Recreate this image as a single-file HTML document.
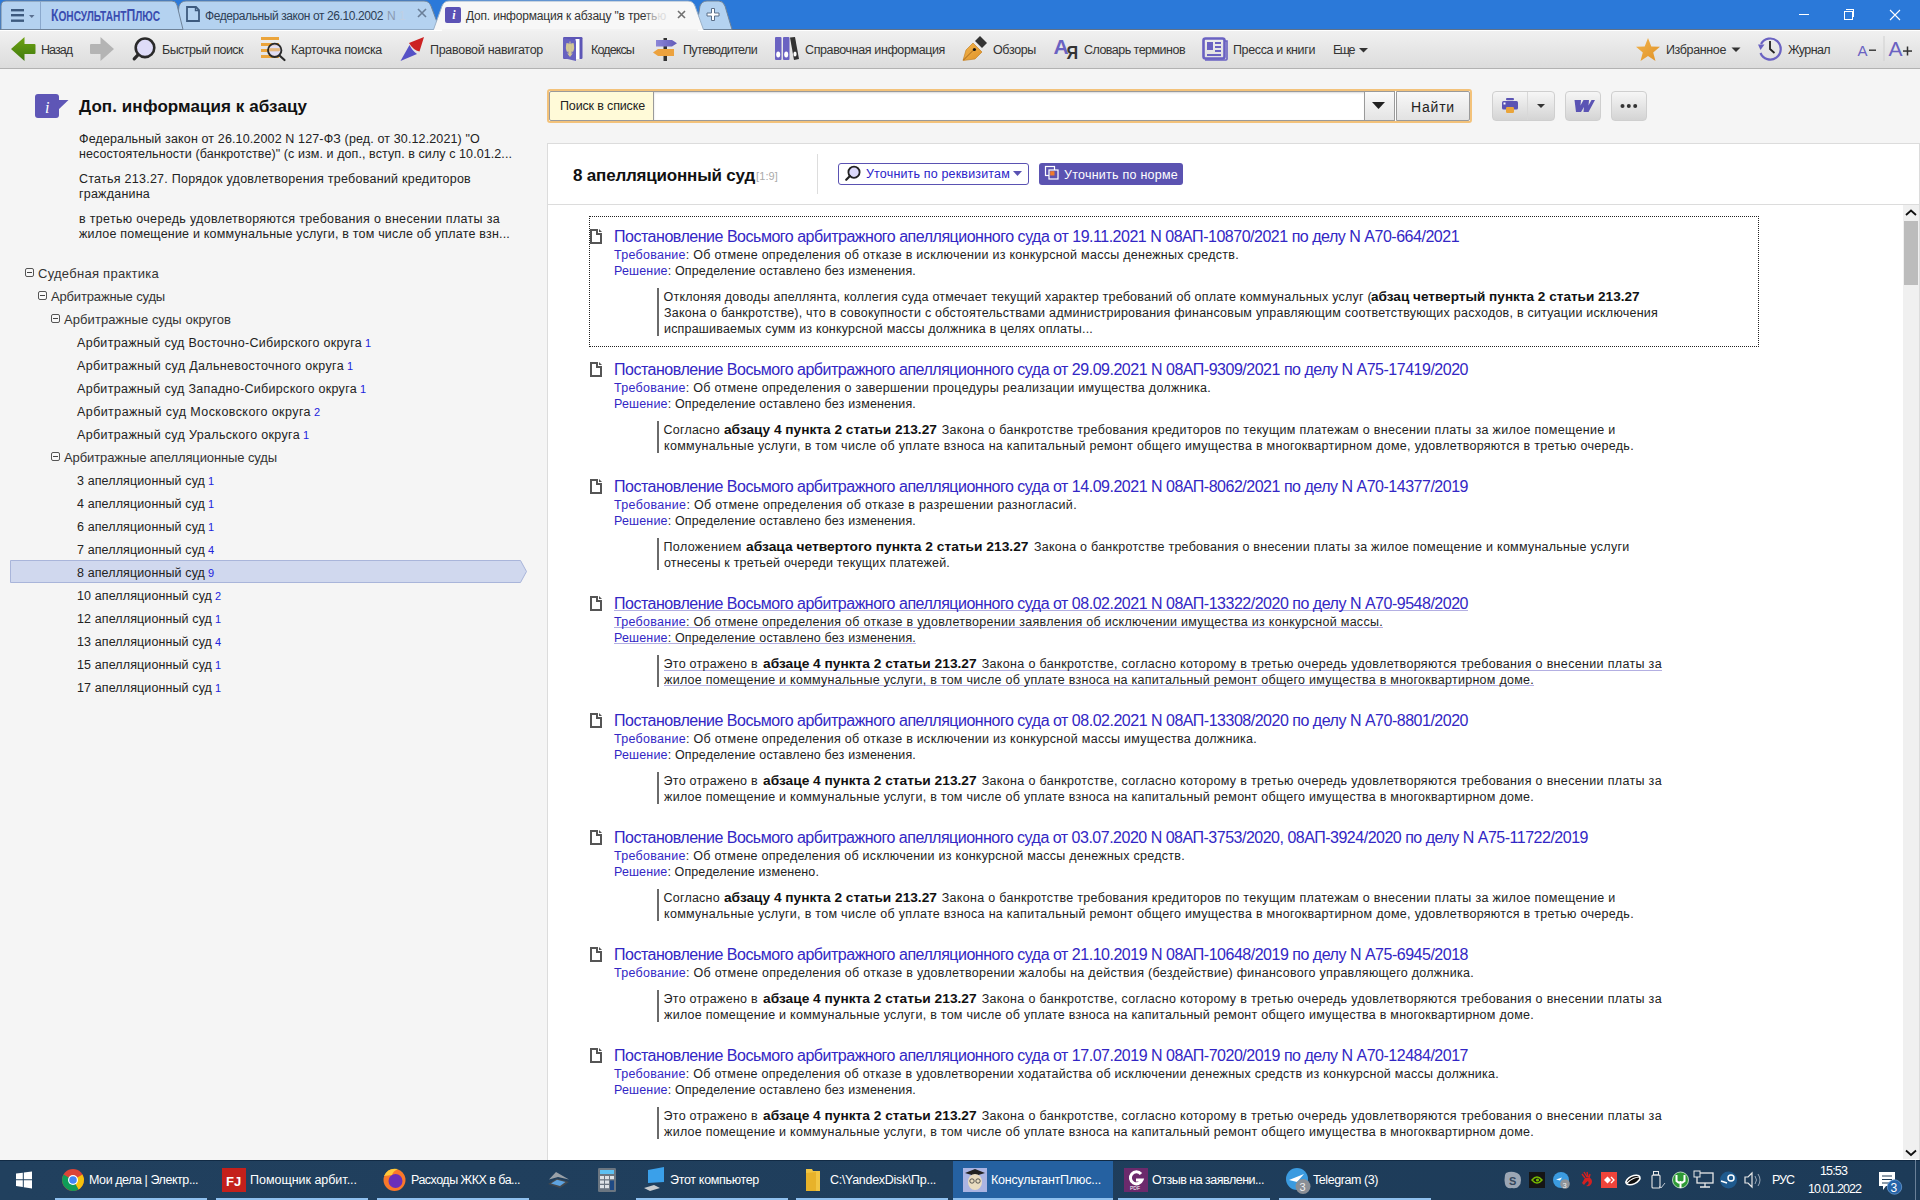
<!DOCTYPE html><html><head><meta charset="utf-8"><style>
html,body{margin:0;padding:0;width:1920px;height:1200px;overflow:hidden;background:#f5f5f5}
body{position:relative;font-family:"Liberation Sans", sans-serif}
.t{position:absolute;white-space:nowrap}
</style></head><body>
<div style="position:absolute;left:0;top:0;width:1920px;height:30px;background:#2b79d9"></div>
<svg style="position:absolute;left:0;top:0" width="1920" height="30">
<rect x="0" y="29" width="1920" height="1" fill="#5f7189"/>
<path d="M176,30 L179,6 Q181,1 186,1 L424,1 Q429,1 431,6 L440,30 Z" fill="#b4d2f0" stroke="#6f8399" stroke-width="1"/>
<path d="M1,30 L1,6 Q1,1 6,1 L172,1 Q176,1 177,5 L183,29.5 L1,29.5 Z" fill="#b4d2f0" stroke="#6f8399" stroke-width="1"/>
<line x1="40.5" y1="1" x2="40.5" y2="29" stroke="#8aa8cc" stroke-width="1"/>
<path d="M696,30 L700,6 Q702,1 707,1 L719,1 Q723,1 725,6 L732,29.5 L696,29.5 Z" fill="#b4d2f0" stroke="#6f8399" stroke-width="1"/>
<path d="M433,31 L442,6 Q444,1 449,1 L688,1 Q693,1 695,6 L704,31 Z" fill="#f7f7f7" stroke="#9ab0c8" stroke-width="1"/>

<rect x="11" y="9" width="13" height="2.4" fill="#3d5a7e"/>
<rect x="11" y="14" width="13" height="2.4" fill="#3d5a7e"/>
<rect x="11" y="19.5" width="13" height="2.4" fill="#3d5a7e"/>
<path d="M29,15 L34.5,15 L31.75,18 Z" fill="#5a7090"/>
<path d="M187,7 L196,7 L199,10 L199,21 L187,21 Z" fill="none" stroke="#3d5a7e" stroke-width="1.8"/>
<path d="M195.5,7 L195.5,10.5 L199,10.5" fill="none" stroke="#3d5a7e" stroke-width="1.4"/>
<path d="M418,9 L426,17 M426,9 L418,17" stroke="#6a7f98" stroke-width="1.6"/>
<rect x="445" y="7" width="16" height="16" rx="2" fill="#5b52b5"/>
<path d="M678,11 L685,18 M685,11 L678,18" stroke="#707070" stroke-width="1.6"/>
<path d="M707,13 L711.5,13 L711.5,8.5 L714.5,8.5 L714.5,13 L719,13 L719,16 L714.5,16 L714.5,20.5 L711.5,20.5 L711.5,16 L707,16 Z" fill="#fff" stroke="#5a6e88" stroke-width="1"/>
</svg>
<div style="position:absolute;left:451px;top:7px;width:6px;height:16px;color:#fff;font:italic bold 12px 'Liberation Serif',serif;line-height:16px;text-align:center">i</div>
<svg style="position:absolute;left:1780;top:0" width="140" height="30">
</svg>
<div style="position:absolute;left:1799px;top:14px;width:10px;height:1px;background:#fff"></div>
<div style="position:absolute;left:1844px;top:11px;width:7px;height:7px;border:1px solid #fff"></div>
<div style="position:absolute;left:1846px;top:9px;width:7px;height:7px;border-top:1px solid #fff;border-right:1px solid #fff"></div>
<svg style="position:absolute;left:1889px;top:9px" width="12" height="12"><path d="M1,1 L11,11 M11,1 L1,11" stroke="#fff" stroke-width="1.1"/></svg>
<div style="position:absolute;left:0;top:30px;width:1920px;height:38px;background:linear-gradient(#f1f1f1,#dcdcdc);border-bottom:1px solid #b2b2b2;box-shadow:inset 0 1px 0 #fff"></div>
<div style="position:absolute;left:442px;top:29px;width:256px;height:2px;background:#f2f2f2"></div>
<svg style="position:absolute;left:0;top:30px" width="1920" height="38">
<defs>
<linearGradient id="gg" x1="0" y1="0" x2="0" y2="1"><stop offset="0" stop-color="#6ea312"/><stop offset="1" stop-color="#3f7a0e"/></linearGradient>
<linearGradient id="og" x1="0" y1="0" x2="1" y2="1"><stop offset="0" stop-color="#f2b44c"/><stop offset="1" stop-color="#e09228"/></linearGradient>
<linearGradient id="pg" x1="0" y1="0" x2="1" y2="0"><stop offset="0" stop-color="#8c86d8"/><stop offset="1" stop-color="#615ab8"/></linearGradient>
</defs>
<!-- back -->
<path d="M11,19 L24.5,7 L24.5,14 L34.5,14 Q35.5,14 35.5,15 L35.5,23 Q35.5,24 34.5,24 L24.5,24 L24.5,31 Z" fill="url(#gg)"/>
<!-- forward -->
<path d="M114,19 L100.5,7 L100.5,14 L91,14 Q90,14 90,15 L90,23 Q90,24 91,24 L100.5,24 L100.5,31 Z" fill="#b4b4b4"/>
<!-- quick search -->
<circle cx="145" cy="17.8" r="9.3" fill="#dedcf8" stroke="#2a2a2a" stroke-width="2.6"/>
<path d="M138.2,24.6 L134.2,28.8" stroke="#2a2a2a" stroke-width="3.2" stroke-linecap="round"/>
<!-- card search -->
<rect x="261" y="7" width="18" height="3" fill="#eba43a"/>
<rect x="261" y="13" width="18" height="3" fill="#eba43a"/>
<rect x="261" y="19" width="18" height="3" fill="#eba43a"/>
<rect x="261" y="25" width="18" height="3" fill="#eba43a"/>
<circle cx="274.7" cy="20.3" r="6.7" fill="#dedcf8" fill-opacity="0.8" stroke="#2a2a2a" stroke-width="1.9"/>
<rect x="269" y="18" width="11" height="3" fill="#eba43a" opacity="0.55"/>
<path d="M279.5,25.5 L284.5,30" stroke="#2a2a2a" stroke-width="2.2" stroke-linecap="round"/>
<!-- navigator -->
<path d="M409,13 L424,7 L419.5,21.5 Q413,20 409,13 Z" fill="#cc2222"/>
<path d="M400.5,31 L409.5,15 Q412.5,21 417,24 Z" fill="#5551c6"/>
<!-- codex -->
<rect x="563" y="7" width="19.5" height="22" rx="1.2" fill="#5d56b6"/>
<rect x="575.5" y="9" width="4" height="20" fill="#fff"/>
<path d="M563,8 L575,10 Q576,10.5 576,12 L576,31 L563,28 Z" fill="#6761c0"/>
<path d="M566.5,13 Q565,18 567,22 L569,21 Q568,17 569,13.5 Z M573.5,13 Q575,18 573,22 L571,21 Q572,17 571,13.5 Z" fill="#d2c796"/>
<path d="M569.5,11.5 L570.5,11.5 L570.5,13.5 L572,15 L571.5,25 L570,27 L568.5,25 L568,15 L569.5,13.5 Z" fill="#d2c796"/>
<path d="M567,22 Q570,27.5 573,22 L572,24.5 Q570,26.5 568,24.5 Z" fill="#d2c796"/>
<!-- guides -->
<rect x="663.5" y="8" width="3.5" height="23" fill="#333"/>
<path d="M656,10 L672,10 L677,13.3 L672,16.6 L656,16.6 Z" fill="url(#pg)"/>
<path d="M674,19 L658,19 L653,22.5 L658,26 L674,26 Z" fill="#eca23e"/>
<!-- reference binders -->
<rect x="775" y="7" width="6.5" height="23" rx="1" fill="#6a62c2"/>
<rect x="783" y="7" width="6.5" height="23" rx="1" fill="#6a62c2"/>
<path d="M790,7.5 L795,7 L799,29 L794,30 Z" fill="#333"/>
<ellipse cx="778.2" cy="24.5" rx="2" ry="3" fill="#fff"/>
<ellipse cx="786.2" cy="24.5" rx="2" ry="3" fill="#fff"/>
<ellipse cx="795" cy="24" rx="1.6" ry="2.6" fill="#fff"/>
<!-- reviews pen -->
<path d="M963,30.5 L966,20 L973,13 L982,22 L975,29 Z" fill="url(#og)" stroke="#c07818" stroke-width="0.6"/>
<path d="M975,11 L980,6 L987,13 L982,18 Z" fill="#333"/>
<path d="M963.5,30 L973.5,20" stroke="#8a5010" stroke-width="0.7"/>
<circle cx="974.4" cy="19.5" r="1.6" fill="#111"/>
<!-- dict -->
<text x="1053.5" y="24" font-family="Liberation Sans" font-weight="bold" font-size="21" fill="#6a62c2">A</text>
<text x="1066.5" y="29" font-family="Liberation Sans" font-weight="bold" font-size="19" fill="#333" transform="translate(1066.5,29) scale(0.85,1) translate(-1066.5,-29)">Я</text>
<!-- press -->
<rect x="1203.5" y="8.5" width="21" height="20" rx="2" fill="none" stroke="#6a62c2" stroke-width="2.6"/>
<path d="M1225,11 L1227,11 L1227,29 Q1227,30 1226,30 L1205,30" fill="none" stroke="#6a62c2" stroke-width="1.6"/>
<rect x="1207" y="12" width="6" height="8" fill="#6a62c2"/>
<rect x="1215" y="12" width="6" height="2" fill="#6a62c2"/>
<rect x="1215" y="16" width="6" height="2" fill="#6a62c2"/>
<rect x="1215" y="20" width="6" height="2" fill="#6a62c2"/>
<rect x="1207" y="24" width="14" height="2" fill="#6a62c2"/>
<!-- more arrow -->
<path d="M1359,18 L1368,18 L1363.5,22.5 Z" fill="#333"/>
<!-- star -->
<path d="M1648,8 L1651.3,16.5 L1660,16.8 L1653.2,22.4 L1655.5,31 L1648,26 L1640.5,31 L1642.8,22.4 L1636,16.8 L1644.7,16.5 Z" fill="url(#og)"/>
<path d="M1731.5,17.5 L1740.5,17.5 L1736,22 Z" fill="#333"/>
<!-- journal clock -->
<path d="M1761,14 A10.5,10.5 0 1 1 1760.5,23" fill="none" stroke="#6a62c2" stroke-width="2.2"/>
<path d="M1758,14.5 L1764.5,14.5 L1760.5,20 Z" fill="#6a62c2"/>
<path d="M1770,11 L1770,19 L1774.5,23" fill="none" stroke="#222" stroke-width="1.8"/>
<!-- A- A+ -->
<text x="1857.5" y="25.5" font-family="Liberation Sans" font-size="15" fill="#6a62c2">A</text>
<rect x="1869" y="19.5" width="7" height="1.4" fill="#333"/>
<rect x="1883.5" y="6" width="1" height="25" fill="#d0d0d0"/>
<text x="1888.5" y="26" font-family="Liberation Sans" font-size="21" fill="#6a62c2">A</text>
<rect x="1903" y="20.3" width="9" height="1.5" fill="#333"/>
<rect x="1906.75" y="16.5" width="1.5" height="9" fill="#333"/>
</svg>
<div style="position:absolute;left:0;top:69px;width:1920px;height:1091px;background:#f5f5f5"></div>
<svg style="position:absolute;left:34px;top:93px" width="36" height="26">
<rect x="1" y="1" width="24" height="24" rx="3" fill="#5e56b6"/>
<path d="M22,7 L34.5,7 L24,17 Z" fill="#5e56b6"/>
<text x="11" y="19.5" font-family="Liberation Serif" font-style="italic" font-size="16" fill="#fff">i</text>
</svg>
<svg style="position:absolute;left:9px;top:559px" width="522" height="26">
<path d="M1.5,1.5 L511.5,1.5 L517.5,12.5 L511.5,23.5 L1.5,23.5 Z" fill="#d0d8ee" stroke="#a9b5da" stroke-width="1"/>
</svg>
<div style="position:absolute;left:25px;top:268px;width:7px;height:7px;border:1px solid #555;border-radius:2px;background:#f8f8f8"></div><div style="position:absolute;left:27px;top:272px;width:5px;height:1px;background:#444"></div>
<div style="position:absolute;left:38px;top:291px;width:7px;height:7px;border:1px solid #555;border-radius:2px;background:#f8f8f8"></div><div style="position:absolute;left:40px;top:295px;width:5px;height:1px;background:#444"></div>
<div style="position:absolute;left:51px;top:314px;width:7px;height:7px;border:1px solid #555;border-radius:2px;background:#f8f8f8"></div><div style="position:absolute;left:53px;top:318px;width:5px;height:1px;background:#444"></div>
<div style="position:absolute;left:51px;top:452px;width:7px;height:7px;border:1px solid #555;border-radius:2px;background:#f8f8f8"></div><div style="position:absolute;left:53px;top:456px;width:5px;height:1px;background:#444"></div>
<div style="position:absolute;left:547px;top:89px;width:921px;height:30px;border:2px solid #f3c27a;border-radius:3px;background:#fff"></div>
<div style="position:absolute;left:549px;top:91px;width:104px;height:28px;background:#fffad8;border:1px solid #9a9a9a;border-radius:2px 0 0 2px"></div>
<div style="position:absolute;left:653px;top:91px;width:711px;height:28px;background:#fff;border-top:1px solid #9a9a9a;border-bottom:1px solid #9a9a9a;border-left:1px solid #9a9a9a;box-shadow:inset 0 1px 2px rgba(0,0,0,0.15)"></div>
<div style="position:absolute;left:1364px;top:91px;width:29px;height:28px;background:linear-gradient(#fafafa,#e4e4e4);border:1px solid #9a9a9a"></div>
<svg style="position:absolute;left:1371px;top:101px" width="15" height="9"><path d="M1,1 L14,1 L7.5,8 Z" fill="#222"/></svg>
<div style="position:absolute;left:1396px;top:91px;width:72px;height:28px;background:linear-gradient(#f8f8f8,#e2e2e2);border:1px solid #9a9a9a;border-radius:0 2px 2px 0"></div>

<div style="position:absolute;left:1492px;top:91px;width:63px;height:30px;border-radius:4px;background:linear-gradient(#f6f6f6,#d4d4d4);border:1px solid #cfcfcf;box-sizing:border-box"></div>
<div style="position:absolute;left:1527px;top:92px;width:1px;height:28px;background:#d8d8d8"></div>
<div style="position:absolute;left:1565px;top:91px;width:36px;height:30px;border-radius:4px;background:linear-gradient(#f6f6f6,#d4d4d4);border:1px solid #cfcfcf;box-sizing:border-box"></div>
<div style="position:absolute;left:1611px;top:91px;width:36px;height:30px;border-radius:4px;background:linear-gradient(#f6f6f6,#d4d4d4);border:1px solid #cfcfcf;box-sizing:border-box"></div>
<svg style="position:absolute;left:1500px;top:96px" width="140" height="20">
<rect x="6" y="2" width="8" height="2.2" rx="1" fill="#5b54b4"/>
<rect x="2" y="5" width="16" height="8.5" rx="1.5" fill="#5b54b4"/>
<rect x="3.5" y="6.5" width="2" height="2" fill="#fff"/>
<rect x="6" y="11" width="8" height="6" rx="1.2" fill="#eaa53a"/>
<path d="M37,8 L45,8 L41,12 Z" fill="#333"/>
<path d="M74.5,4 L81,4 L80.5,9.5 L83.5,4 L89,4 L88.5,9.5 L91.5,4 L95,4 L88.5,16 L83.5,16 L84,11 L81,16 L76,16 Z" fill="#5b54b4"/>
<circle cx="122.5" cy="10" r="2" fill="#333"/><circle cx="128.8" cy="10" r="2" fill="#333"/><circle cx="135.2" cy="10" r="2" fill="#333"/>
</svg>
<div style="position:absolute;left:547px;top:143px;width:1371px;height:1016px;background:#fff;border-left:1px solid #dcdcdc;border-top:1px solid #dcdcdc;border-right:1px solid #dcdcdc"></div>
<div style="position:absolute;left:548px;top:204px;width:1371px;height:1px;background:#dcdcdc"></div>
<div style="position:absolute;left:817px;top:154px;width:1px;height:40px;background:#dddddd"></div>
<div style="position:absolute;left:838px;top:163px;width:189px;height:20px;border:1px solid #5a52b2;border-radius:3px;background:#fff"></div>
<svg style="position:absolute;left:844px;top:165px" width="18" height="18"><circle cx="10" cy="7.2" r="5.6" fill="#dcd9fa" stroke="#222" stroke-width="1.8"/><path d="M6,11 L2.2,14.8" stroke="#222" stroke-width="2.2" stroke-linecap="round"/></svg>
<svg style="position:absolute;left:1013px;top:171px" width="10" height="6"><path d="M0,0 L9,0 L4.5,5 Z" fill="#5a52b2"/></svg>
<div style="position:absolute;left:1039px;top:163px;width:144px;height:22px;border-radius:3px;background:#5b53b1"></div>
<svg style="position:absolute;left:1044px;top:165px" width="18" height="18">
<rect x="1.5" y="1.5" width="9" height="9" fill="none" stroke="#fff" stroke-width="1.2"/>
<rect x="5" y="5" width="9" height="9" fill="#5b53b1" stroke="#fff" stroke-width="1.2"/>
<rect x="6.2" y="6.2" width="4.3" height="4.3" fill="#f07b2a"/>
</svg>
<div style="position:absolute;left:1903px;top:205px;width:16px;height:954px;background:#f0f0f0"></div>
<div style="position:absolute;left:1904px;top:221px;width:14px;height:64px;background:#bcbcbc"></div>
<svg style="position:absolute;left:1904px;top:208px" width="14" height="10"><path d="M2,7 L7,2.5 L12,7" fill="none" stroke="#111" stroke-width="1.8"/></svg>
<svg style="position:absolute;left:1904px;top:1148px" width="14" height="10"><path d="M2,2.5 L7,7 L12,2.5" fill="none" stroke="#111" stroke-width="1.8"/></svg>

<div style="position:absolute;left:589px;top:216px;width:1168px;height:129px;border:1px dotted #222"></div>
<svg style="position:absolute;left:590px;top:229px" width="12" height="15"><path d="M0,0 H8 V4 H12 V15 H0 Z M2,2 V13 H10 V6 H6 V2 Z" fill="#555" fill-rule="evenodd"/><path d="M9,0 L9,3 L12,3 Z" fill="#555"/><path d="M2,2 H6 V6 H10 V13 H2 Z" fill="#fff"/></svg>
<div style="position:absolute;left:657px;top:288px;width:2px;height:48px;background:#6a6a6a"></div>
<svg style="position:absolute;left:590px;top:362px" width="12" height="15"><path d="M0,0 H8 V4 H12 V15 H0 Z M2,2 V13 H10 V6 H6 V2 Z" fill="#555" fill-rule="evenodd"/><path d="M9,0 L9,3 L12,3 Z" fill="#555"/><path d="M2,2 H6 V6 H10 V13 H2 Z" fill="#fff"/></svg>
<div style="position:absolute;left:657px;top:421px;width:2px;height:32px;background:#6a6a6a"></div>
<svg style="position:absolute;left:590px;top:479px" width="12" height="15"><path d="M0,0 H8 V4 H12 V15 H0 Z M2,2 V13 H10 V6 H6 V2 Z" fill="#555" fill-rule="evenodd"/><path d="M9,0 L9,3 L12,3 Z" fill="#555"/><path d="M2,2 H6 V6 H10 V13 H2 Z" fill="#fff"/></svg>
<div style="position:absolute;left:657px;top:538px;width:2px;height:32px;background:#6a6a6a"></div>
<svg style="position:absolute;left:590px;top:596px" width="12" height="15"><path d="M0,0 H8 V4 H12 V15 H0 Z M2,2 V13 H10 V6 H6 V2 Z" fill="#555" fill-rule="evenodd"/><path d="M9,0 L9,3 L12,3 Z" fill="#555"/><path d="M2,2 H6 V6 H10 V13 H2 Z" fill="#fff"/></svg>
<div style="position:absolute;left:657px;top:655px;width:2px;height:32px;background:#6a6a6a"></div>
<div style="position:absolute;left:664px;top:670px;width:998px;height:1px;background:#b3afe2"></div>
<svg style="position:absolute;left:590px;top:713px" width="12" height="15"><path d="M0,0 H8 V4 H12 V15 H0 Z M2,2 V13 H10 V6 H6 V2 Z" fill="#555" fill-rule="evenodd"/><path d="M9,0 L9,3 L12,3 Z" fill="#555"/><path d="M2,2 H6 V6 H10 V13 H2 Z" fill="#fff"/></svg>
<div style="position:absolute;left:657px;top:772px;width:2px;height:32px;background:#6a6a6a"></div>
<svg style="position:absolute;left:590px;top:830px" width="12" height="15"><path d="M0,0 H8 V4 H12 V15 H0 Z M2,2 V13 H10 V6 H6 V2 Z" fill="#555" fill-rule="evenodd"/><path d="M9,0 L9,3 L12,3 Z" fill="#555"/><path d="M2,2 H6 V6 H10 V13 H2 Z" fill="#fff"/></svg>
<div style="position:absolute;left:657px;top:889px;width:2px;height:32px;background:#6a6a6a"></div>
<svg style="position:absolute;left:590px;top:947px" width="12" height="15"><path d="M0,0 H8 V4 H12 V15 H0 Z M2,2 V13 H10 V6 H6 V2 Z" fill="#555" fill-rule="evenodd"/><path d="M9,0 L9,3 L12,3 Z" fill="#555"/><path d="M2,2 H6 V6 H10 V13 H2 Z" fill="#fff"/></svg>
<div style="position:absolute;left:657px;top:990px;width:2px;height:32px;background:#6a6a6a"></div>
<svg style="position:absolute;left:590px;top:1048px" width="12" height="15"><path d="M0,0 H8 V4 H12 V15 H0 Z M2,2 V13 H10 V6 H6 V2 Z" fill="#555" fill-rule="evenodd"/><path d="M9,0 L9,3 L12,3 Z" fill="#555"/><path d="M2,2 H6 V6 H10 V13 H2 Z" fill="#fff"/></svg>
<div style="position:absolute;left:657px;top:1107px;width:2px;height:32px;background:#6a6a6a"></div>
<div style="position:absolute;left:0;top:1160px;width:1920px;height:40px;background:linear-gradient(90deg,#21405e,#1f3e5c 50%,#1d3b58);border-top:1px solid #112a44;box-sizing:border-box"></div>
<div style="position:absolute;left:953px;top:1161px;width:160px;height:39px;background:#2561a1"></div>
<div style="position:absolute;left:55px;top:1198px;width:152px;height:2px;background:#8fc0ee"></div>
<div style="position:absolute;left:216px;top:1198px;width:152px;height:2px;background:#8fc0ee"></div>
<div style="position:absolute;left:377px;top:1198px;width:152px;height:2px;background:#8fc0ee"></div>
<div style="position:absolute;left:636px;top:1198px;width:152px;height:2px;background:#8fc0ee"></div>
<div style="position:absolute;left:796px;top:1198px;width:152px;height:2px;background:#8fc0ee"></div>
<div style="position:absolute;left:953px;top:1198px;width:160px;height:2px;background:#8fc0ee"></div>
<div style="position:absolute;left:1118px;top:1198px;width:152px;height:2px;background:#8fc0ee"></div>
<div style="position:absolute;left:1279px;top:1198px;width:152px;height:2px;background:#8fc0ee"></div>
<svg style="position:absolute;left:0;top:1160px" width="1920" height="40">
<!-- windows logo -->
<path d="M16,13.6 L22.8,12.7 L22.8,19.3 L16,19.3 Z M23.8,12.5 L32,11.4 L32,19.3 L23.8,19.3 Z M16,20.3 L22.8,20.3 L22.8,27 L16,26.1 Z M23.8,20.3 L32,20.3 L32,28.4 L23.8,27.2 Z" fill="#fff"/>
<!-- chrome -->
<circle cx="73" cy="20" r="11" fill="#db4437"/>
<path d="M73,20 L82.5,14.5 A11,11 0 0 1 78.5,29.5 Z" fill="#f4c20d"/>
<path d="M73,20 L78.5,29.5 A11,11 0 0 1 62.5,17 L63.5,14.5 Z" fill="#0f9d58"/>
<circle cx="73" cy="20" r="5" fill="#fff"/><circle cx="73" cy="20" r="3.8" fill="#4285f4"/>
<!-- red FJ -->
<rect x="222" y="8" width="24" height="24" fill="#c4201b"/>
<text x="226" y="26" font-family="Liberation Sans" font-weight="bold" font-size="13" fill="#fff">FJ</text>
<!-- firefox -->
<circle cx="394.5" cy="20" r="11" fill="#f9782a"/>
<circle cx="395.5" cy="21" r="7" fill="#6a2fb8"/>
<path d="M384,16 Q388,7 398,9 Q393,11 392,15 Z" fill="#ffc93a"/>
<!-- scanner -->
<path d="M548,24 L560,28 L569,22 L557,18.5 Z" fill="#44494f"/>
<path d="M551,23.5 L560,26 L565.5,22 L557,19.8 Z" fill="#5ea3e0"/>
<path d="M549,19.5 L556,12 L569,19.5 L558,17 Z" fill="#9aa1a8"/>
<!-- calculator -->
<rect x="598" y="8" width="18" height="24" rx="1.2" fill="#6b7681"/>
<rect x="600" y="10" width="14" height="4" fill="#5cc0f2"/>
<g fill="#dde2e6"><rect x="600" y="16" width="4" height="3.2"/><rect x="605" y="16" width="4" height="3.2"/><rect x="610" y="16" width="4" height="3.2"/>
<rect x="600" y="20.5" width="4" height="3.2"/><rect x="605" y="20.5" width="4" height="3.2"/>
<rect x="600" y="25" width="4" height="3.2"/><rect x="605" y="25" width="4" height="3.2"/></g>
<rect x="610" y="20.5" width="4" height="9.5" fill="#1f4a84"/>
<!-- this computer -->
<path d="M648,10 L664,7 L664,22 L648,23 Z" fill="#3aa0ea"/>
<path d="M644,28 L654,25 L660,28 L650,31 Z" fill="#c8ccd0"/>
<!-- folder -->
<path d="M806,9 L812,9 L813,11 L820,11 L820,31 L806,31 Z" fill="#f1c543"/>
<path d="M806,13 L816,12 L816,31 L806,31 Z" fill="#e7b22a"/>
<!-- konsultant avatar -->
<rect x="963" y="8" width="24" height="24" fill="#aab4e2"/>
<path d="M965,13 L975,9 L985,13 L975,16 Z" fill="#222"/>
<ellipse cx="975" cy="22" rx="7" ry="8" fill="#e9dcc0"/>
<circle cx="972" cy="21" r="2.2" fill="none" stroke="#333" stroke-width="0.8"/><circle cx="978" cy="21" r="2.2" fill="none" stroke="#333" stroke-width="0.8"/>
<!-- pdf -->
<rect x="1124" y="8" width="24" height="24" fill="#6c2a6c"/>
<path d="M1141,14 A6,6 0 1 0 1142,20 L1136,20" fill="none" stroke="#fff" stroke-width="3"/>
<text x="1130" y="30" font-family="Liberation Sans" font-size="5" fill="#fff">PDF</text>
<!-- telegram -->
<circle cx="1297" cy="19" r="11" fill="#3b9be0"/>
<path d="M1289,20 L1304,14 L1297,22 Z" fill="#fff"/>
<circle cx="1303" cy="26.5" r="7.5" fill="#8a8f96"/>
<text x="1299.5" y="31" font-family="Liberation Sans" font-size="11" fill="#eee">3</text>
<!-- tray -->
<path d="M1506,13 Q1510,11 1514,12 Q1521,13 1521,20 Q1521,24 1519,26 Q1517,29 1512,28 Q1506,29 1505,24 Q1504,20 1505,15 Z" fill="#9ba6b4"/>
<text x="1509" y="24.5" font-family="Liberation Sans" font-weight="bold" font-size="11" fill="#34465c">S</text>
<rect x="1529" y="12" width="16" height="16" fill="#151515"/>
<path d="M1532,20 Q1537,14 1542,20 Q1537,26 1532,20 Z" fill="none" stroke="#76b900" stroke-width="1.5"/>
<circle cx="1537.5" cy="20" r="1.6" fill="#76b900"/>
<circle cx="1561" cy="20" r="8" fill="#3b9be0"/>
<path d="M1556,19.5 L1562,17.5 L1560,20.5 Z" fill="#fff"/>
<circle cx="1565" cy="24" r="4.8" fill="#8f9399"/>
<text x="1562.5" y="27.5" font-family="Liberation Sans" font-size="7.5" fill="#eee">3</text>
<path d="M1582,14 L1585,18 M1584,12 L1587,17 M1587,12 L1588,17 M1590,14 L1589,18" stroke="#d42020" stroke-width="1.4"/>
<path d="M1585,18 Q1592,16 1592,22 Q1591,27 1586,26 Q1590,24 1588,21 Q1586,22 1584,25 L1582,23 Z" fill="#d42020"/>
<rect x="1601" y="12" width="16" height="16" fill="#ef443b"/>
<path d="M1604,20 L1607.5,16.5 L1611,20 L1607.5,23.5 Z" fill="#fff"/>
<path d="M1611,17 L1614,20 L1611,23" fill="none" stroke="#fff" stroke-width="1.3"/>
<ellipse cx="1633" cy="20" rx="7.5" ry="4" transform="rotate(-25 1633 20)" fill="#0d0d0d" stroke="#fff" stroke-width="1.6"/>
<path d="M1627,23 Q1633,17 1640,17" fill="none" stroke="#fff" stroke-width="1.2"/>
<rect x="1652" y="15" width="8" height="13" rx="1" fill="none" stroke="#e8e8e8" stroke-width="1.1"/>
<rect x="1653.5" y="11.5" width="5" height="3.5" fill="none" stroke="#e8e8e8" stroke-width="1"/>
<path d="M1659,26 L1661,28 L1665,23" fill="none" stroke="#bfc8d2" stroke-width="1"/>
<circle cx="1680.5" cy="20" r="8" fill="#2e9a36" stroke="#d8efd8" stroke-width="0.8"/>
<path d="M1676.5,15 L1676.5,21 Q1680.5,25 1684.5,21 L1684.5,15 M1680.5,21 L1680.5,28" fill="none" stroke="#fff" stroke-width="2"/>
<rect x="1697" y="13" width="16" height="10" fill="none" stroke="#e8e8e8" stroke-width="1.3"/>
<path d="M1705,23 L1705,27 M1700,27 L1710,27" stroke="#e8e8e8" stroke-width="1.3"/>
<rect x="1694" y="11" width="6" height="6" fill="#1f3e5c" stroke="#e8e8e8" stroke-width="1"/>
<circle cx="1728.5" cy="20" r="8.5" fill="#1e5a8e"/>
<circle cx="1731" cy="18" r="3" fill="none" stroke="#fff" stroke-width="1.5"/>
<path d="M1721,21 L1727,23" stroke="#fff" stroke-width="1.6"/>
<path d="M1745,17 L1748,17 L1752,13 L1752,27 L1748,23 L1745,23 Z" fill="none" stroke="#e8e8e8" stroke-width="1.2"/>
<path d="M1755,16 Q1758,20 1755,24 M1758,14 Q1762,20 1758,26" fill="none" stroke="#9aa8b8" stroke-width="1"/>
<!-- notification -->
<path d="M1879,12 L1895,12 L1895,26 L1886,26 L1883,30 L1883,26 L1879,26 Z" fill="#fff"/>
<path d="M1882,16 L1892,16 M1882,19.5 L1892,19.5 M1882,23 L1889,23" stroke="#1c3954" stroke-width="1"/>
<circle cx="1894.5" cy="27" r="7.2" fill="#2563a8" stroke="#6a9ad0" stroke-width="0.8"/>
<text x="1890.5" y="31.5" font-family="Liberation Sans" font-size="12" fill="#fff">3</text>
<rect x="1915" y="0" width="1" height="40" fill="#6a8098"/>
</svg>
<div class="t" id="t0" style="left:51px;top:3.85px;font-size:17.4px;line-height:22px;color:#3a4db0;font-weight:bold;transform:scaleX(0.6991);transform-origin:0 0;">К<span style="font-size:14.5px">ОНСУЛЬТАНТ</span>П<span style="font-size:14.5px">ЛЮС</span></div>
<div class="t" id="t1" style="left:205px;top:8.53px;font-size:12px;line-height:15px;color:#2d3e55;letter-spacing:-0.406px;">Федеральный закон от 26.10.2002</div>
<div class="t" id="t2" style="left:387px;top:8.53px;font-size:12px;line-height:15px;color:#8a9ab2;">N <span style="color:#c0d0e4">1</span></div>
<div class="t" id="t3" style="left:466px;top:8.53px;font-size:12px;line-height:15px;color:#333;letter-spacing:-0.189px;">Доп. информация к абзацу "в тре<span style="color:#777">т</span><span style="color:#aaa">ь</span><span style="color:#ddd">ю</span></div>
<div class="t" id="t4" style="left:41px;top:41.87px;font-size:12.5px;line-height:16px;color:#333;letter-spacing:-0.966px;">Назад</div>
<div class="t" id="t5" style="left:162px;top:41.87px;font-size:12.5px;line-height:16px;color:#333;letter-spacing:-0.537px;">Быстрый поиск</div>
<div class="t" id="t6" style="left:291px;top:41.87px;font-size:12.5px;line-height:16px;color:#333;letter-spacing:-0.301px;">Карточка поиска</div>
<div class="t" id="t7" style="left:430px;top:41.87px;font-size:12.5px;line-height:16px;color:#333;letter-spacing:-0.288px;">Правовой навигатор</div>
<div class="t" id="t8" style="left:591px;top:41.87px;font-size:12.5px;line-height:16px;color:#333;letter-spacing:-0.866px;">Кодексы</div>
<div class="t" id="t9" style="left:683px;top:41.87px;font-size:12.5px;line-height:16px;color:#333;letter-spacing:-0.635px;">Путеводители</div>
<div class="t" id="t10" style="left:805px;top:41.87px;font-size:12.5px;line-height:16px;color:#333;letter-spacing:-0.382px;">Справочная информация</div>
<div class="t" id="t11" style="left:993px;top:41.87px;font-size:12.5px;line-height:16px;color:#333;letter-spacing:-0.349px;">Обзоры</div>
<div class="t" id="t12" style="left:1084px;top:41.87px;font-size:12.5px;line-height:16px;color:#333;letter-spacing:-0.523px;">Словарь терминов</div>
<div class="t" id="t13" style="left:1233px;top:41.87px;font-size:12.5px;line-height:16px;color:#333;letter-spacing:-0.369px;">Пресса и книги</div>
<div class="t" id="t14" style="left:1333px;top:41.87px;font-size:12.5px;line-height:16px;color:#333;letter-spacing:-1.479px;">Еще</div>
<div class="t" id="t15" style="left:1666px;top:41.87px;font-size:12.5px;line-height:16px;color:#333;letter-spacing:-0.373px;">Избранное</div>
<div class="t" id="t16" style="left:1788px;top:41.87px;font-size:12.5px;line-height:16px;color:#333;letter-spacing:-0.604px;">Журнал</div>
<div class="t" id="t17" style="left:79px;top:96.38px;font-size:17px;line-height:22px;color:#111;font-weight:bold;letter-spacing:0.074px;">Доп. информация к абзацу</div>
<div class="t" id="t18" style="left:79px;top:130.87px;font-size:12.5px;line-height:16px;color:#222;letter-spacing:0.135px;">Федеральный закон от 26.10.2002 N 127-ФЗ (ред. от 30.12.2021) "О</div>
<div class="t" id="t19" style="left:79px;top:145.87px;font-size:12.5px;line-height:16px;color:#222;letter-spacing:0.082px;">несостоятельности (банкротстве)" (с изм. и доп., вступ. в силу с 10.01.2...</div>
<div class="t" id="t20" style="left:79px;top:170.87px;font-size:12.5px;line-height:16px;color:#222;letter-spacing:0.255px;">Статья 213.27. Порядок удовлетворения требований кредиторов</div>
<div class="t" id="t21" style="left:79px;top:185.87px;font-size:12.5px;line-height:16px;color:#222;letter-spacing:0.219px;">гражданина</div>
<div class="t" id="t22" style="left:79px;top:210.87px;font-size:12.5px;line-height:16px;color:#222;letter-spacing:0.319px;">в третью очередь удовлетворяются требования о внесении платы за</div>
<div class="t" id="t23" style="left:79px;top:225.87px;font-size:12.5px;line-height:16px;color:#222;letter-spacing:0.192px;">жилое помещение и коммунальные услуги, в том числе об уплате взн...</div>
<div class="t" id="t24" style="left:38px;top:265.20px;font-size:13px;line-height:17px;color:#333;letter-spacing:0.271px;">Судебная практика</div>
<div class="t" id="t25" style="left:51px;top:288.20px;font-size:13px;line-height:17px;color:#333;letter-spacing:-0.162px;">Арбитражные суды</div>
<div class="t" id="t26" style="left:64px;top:311.20px;font-size:13px;line-height:17px;color:#333;letter-spacing:0.071px;">Арбитражные суды округов</div>
<div class="t" id="t27" style="left:77px;top:334.87px;font-size:12.5px;line-height:16px;color:#222;letter-spacing:0.302px;">Арбитражный суд Восточно-Сибирского округа</div>
<div class="t" id="t28" style="left:365px;top:336.36px;font-size:11px;line-height:14px;color:#2222dd;">1</div>
<div class="t" id="t29" style="left:77px;top:357.87px;font-size:12.5px;line-height:16px;color:#222;letter-spacing:0.347px;">Арбитражный суд Дальневосточного округа</div>
<div class="t" id="t30" style="left:347px;top:359.36px;font-size:11px;line-height:14px;color:#2222dd;">1</div>
<div class="t" id="t31" style="left:77px;top:380.87px;font-size:12.5px;line-height:16px;color:#222;letter-spacing:0.305px;">Арбитражный суд Западно-Сибирского округа</div>
<div class="t" id="t32" style="left:360px;top:382.36px;font-size:11px;line-height:14px;color:#2222dd;">1</div>
<div class="t" id="t33" style="left:77px;top:403.87px;font-size:12.5px;line-height:16px;color:#222;letter-spacing:0.421px;">Арбитражный суд Московского округа</div>
<div class="t" id="t34" style="left:314px;top:405.36px;font-size:11px;line-height:14px;color:#2222dd;">2</div>
<div class="t" id="t35" style="left:77px;top:426.87px;font-size:12.5px;line-height:16px;color:#222;letter-spacing:0.335px;">Арбитражный суд Уральского округа</div>
<div class="t" id="t36" style="left:303px;top:428.36px;font-size:11px;line-height:14px;color:#2222dd;">1</div>
<div class="t" id="t37" style="left:64px;top:449.20px;font-size:13px;line-height:17px;color:#333;letter-spacing:-0.111px;">Арбитражные апелляционные суды</div>
<div class="t" id="t38" style="left:77px;top:472.87px;font-size:12.5px;line-height:16px;color:#222;letter-spacing:0.118px;">3 апелляционный суд</div>
<div class="t" id="t39" style="left:208px;top:474.36px;font-size:11px;line-height:14px;color:#2222dd;">1</div>
<div class="t" id="t40" style="left:77px;top:495.87px;font-size:12.5px;line-height:16px;color:#222;letter-spacing:0.118px;">4 апелляционный суд</div>
<div class="t" id="t41" style="left:208px;top:497.36px;font-size:11px;line-height:14px;color:#2222dd;">1</div>
<div class="t" id="t42" style="left:77px;top:518.87px;font-size:12.5px;line-height:16px;color:#222;letter-spacing:0.118px;">6 апелляционный суд</div>
<div class="t" id="t43" style="left:208px;top:520.36px;font-size:11px;line-height:14px;color:#2222dd;">1</div>
<div class="t" id="t44" style="left:77px;top:541.87px;font-size:12.5px;line-height:16px;color:#222;letter-spacing:0.118px;">7 апелляционный суд</div>
<div class="t" id="t45" style="left:208px;top:543.36px;font-size:11px;line-height:14px;color:#2222dd;">4</div>
<div class="t" id="t46" style="left:77px;top:564.87px;font-size:12.5px;line-height:16px;color:#222;letter-spacing:0.118px;">8 апелляционный суд</div>
<div class="t" id="t47" style="left:208px;top:566.36px;font-size:11px;line-height:14px;color:#2222dd;">9</div>
<div class="t" id="t48" style="left:77px;top:587.87px;font-size:12.5px;line-height:16px;color:#222;letter-spacing:0.114px;">10 апелляционный суд</div>
<div class="t" id="t49" style="left:215px;top:589.36px;font-size:11px;line-height:14px;color:#2222dd;">2</div>
<div class="t" id="t50" style="left:77px;top:610.87px;font-size:12.5px;line-height:16px;color:#222;letter-spacing:0.114px;">12 апелляционный суд</div>
<div class="t" id="t51" style="left:215px;top:612.36px;font-size:11px;line-height:14px;color:#2222dd;">1</div>
<div class="t" id="t52" style="left:77px;top:633.87px;font-size:12.5px;line-height:16px;color:#222;letter-spacing:0.114px;">13 апелляционный суд</div>
<div class="t" id="t53" style="left:215px;top:635.36px;font-size:11px;line-height:14px;color:#2222dd;">4</div>
<div class="t" id="t54" style="left:77px;top:656.87px;font-size:12.5px;line-height:16px;color:#222;letter-spacing:0.114px;">15 апелляционный суд</div>
<div class="t" id="t55" style="left:215px;top:658.36px;font-size:11px;line-height:14px;color:#2222dd;">1</div>
<div class="t" id="t56" style="left:77px;top:679.87px;font-size:12.5px;line-height:16px;color:#222;letter-spacing:0.114px;">17 апелляционный суд</div>
<div class="t" id="t57" style="left:215px;top:681.36px;font-size:11px;line-height:14px;color:#2222dd;">1</div>
<div class="t" id="t58" style="left:560px;top:97.87px;font-size:12.5px;line-height:16px;color:#222;letter-spacing:-0.146px;">Поиск в списке</div>
<div class="t" id="t59" style="left:1411px;top:98.37px;font-size:14px;line-height:18px;color:#222;letter-spacing:0.809px;">Найти</div>
<div class="t" id="t60" style="left:573px;top:165.38px;font-size:17px;line-height:22px;color:#111;font-weight:bold;letter-spacing:-0.193px;">8 апелляционный суд</div>
<div class="t" id="t61" style="left:756px;top:169.36px;font-size:11px;line-height:14px;color:#aaa;letter-spacing:0.119px;">[1:9]</div>
<div class="t" id="t62" style="left:866px;top:165.87px;font-size:12.5px;line-height:16px;color:#2a22c8;letter-spacing:0.165px;">Уточнить по реквизитам</div>
<div class="t" id="t63" style="left:1064px;top:166.87px;font-size:12.5px;line-height:16px;color:#fff;letter-spacing:0.244px;">Уточнить по норме</div>
<div class="t" id="t64" style="left:614px;top:226.71px;font-size:16px;line-height:20px;color:#3226c4;letter-spacing:-0.483px;">Постановление Восьмого арбитражного апелляционного суда от 19.11.2021 N 08АП-10870/2021 по делу N А70-664/2021</div>
<div class="t" id="t65" style="left:614px;top:246.87px;font-size:12.5px;line-height:16px;color:#222;letter-spacing:0.271px;"><span style="color:#3226c4">Требование</span>: Об отмене определения об отказе в исключении из конкурсной массы денежных средств.</div>
<div class="t" id="t66" style="left:614px;top:262.87px;font-size:12.5px;line-height:16px;color:#222;letter-spacing:0.159px;"><span style="color:#3226c4">Решение</span>: Определение оставлено без изменения.</div>
<div class="t" id="t67" style="left:663.5px;top:288.87px;font-size:12.5px;line-height:16px;color:#222;letter-spacing:0.220px;">Отклоняя доводы апеллянта, коллегия суда отмечает текущий характер требований об оплате коммунальных услуг (</div>
<div class="t" id="t68" style="left:1371.4px;top:288.87px;font-size:12.5px;line-height:16px;color:#111;font-weight:bold;transform:scaleX(1.0864);transform-origin:0 0;">абзац четвертый пункта 2 статьи 213.27</div>
<div class="t" id="t69" style="left:664px;top:304.87px;font-size:12.5px;line-height:16px;color:#222;letter-spacing:0.233px;">Закона о банкротстве), что в совокупности с обстоятельствами администрирования финансовым управляющим соответствующих расходов, в ситуации исключения</div>
<div class="t" id="t70" style="left:664px;top:320.87px;font-size:12.5px;line-height:16px;color:#222;letter-spacing:0.185px;">испрашиваемых сумм из конкурсной массы должника в целях оплаты...</div>
<div class="t" id="t71" style="left:614px;top:359.71px;font-size:16px;line-height:20px;color:#3226c4;letter-spacing:-0.489px;">Постановление Восьмого арбитражного апелляционного суда от 29.09.2021 N 08АП-9309/2021 по делу N А75-17419/2020</div>
<div class="t" id="t72" style="left:614px;top:379.87px;font-size:12.5px;line-height:16px;color:#222;letter-spacing:0.272px;"><span style="color:#3226c4">Требование</span>: Об отмене определения о завершении процедуры реализации имущества должника.</div>
<div class="t" id="t73" style="left:614px;top:395.87px;font-size:12.5px;line-height:16px;color:#222;letter-spacing:0.159px;"><span style="color:#3226c4">Решение</span>: Определение оставлено без изменения.</div>
<div class="t" id="t74" style="left:663.5px;top:421.87px;font-size:12.5px;line-height:16px;color:#222;letter-spacing:0.222px;">Согласно</div>
<div class="t" id="t75" style="left:724.2px;top:421.87px;font-size:12.5px;line-height:16px;color:#111;font-weight:bold;transform:scaleX(1.0943);transform-origin:0 0;">абзацу 4 пункта 2 статьи 213.27</div>
<div class="t" id="t76" style="left:941.7px;top:421.87px;font-size:12.5px;line-height:16px;color:#222;letter-spacing:0.308px;">Закона о банкротстве требования кредиторов по текущим платежам о внесении платы за жилое помещение и</div>
<div class="t" id="t77" style="left:664px;top:437.87px;font-size:12.5px;line-height:16px;color:#222;letter-spacing:0.292px;">коммунальные услуги, в том числе об уплате взноса на капитальный ремонт общего имущества в многоквартирном доме, удовлетворяются в третью очередь.</div>
<div class="t" id="t78" style="left:614px;top:476.71px;font-size:16px;line-height:20px;color:#3226c4;letter-spacing:-0.489px;">Постановление Восьмого арбитражного апелляционного суда от 14.09.2021 N 08АП-8062/2021 по делу N А70-14377/2019</div>
<div class="t" id="t79" style="left:614px;top:496.87px;font-size:12.5px;line-height:16px;color:#222;letter-spacing:0.330px;"><span style="color:#3226c4">Требование</span>: Об отмене определения об отказе в разрешении разногласий.</div>
<div class="t" id="t80" style="left:614px;top:512.87px;font-size:12.5px;line-height:16px;color:#222;letter-spacing:0.159px;"><span style="color:#3226c4">Решение</span>: Определение оставлено без изменения.</div>
<div class="t" id="t81" style="left:663.5px;top:538.87px;font-size:12.5px;line-height:16px;color:#222;letter-spacing:0.364px;">Положением</div>
<div class="t" id="t82" style="left:746.4px;top:538.87px;font-size:12.5px;line-height:16px;color:#111;font-weight:bold;transform:scaleX(1.1030);transform-origin:0 0;">абзаца четвертого пункта 2 статьи 213.27</div>
<div class="t" id="t83" style="left:1033.9px;top:538.87px;font-size:12.5px;line-height:16px;color:#222;letter-spacing:0.257px;">Закона о банкротстве требования о внесении платы за жилое помещение и коммунальные услуги</div>
<div class="t" id="t84" style="left:664px;top:554.87px;font-size:12.5px;line-height:16px;color:#222;letter-spacing:0.172px;">отнесены к третьей очереди текущих платежей.</div>
<div class="t" id="t85" style="left:614px;top:593.71px;font-size:16px;line-height:20px;color:#3226c4;letter-spacing:-0.489px;text-decoration:underline;text-decoration-color:#b3afe2;text-decoration-skip-ink:none;">Постановление Восьмого арбитражного апелляционного суда от 08.02.2021 N 08АП-13322/2020 по делу N А70-9548/2020</div>
<div class="t" id="t86" style="left:614px;top:613.87px;font-size:12.5px;line-height:16px;color:#222;letter-spacing:0.289px;text-decoration:underline;text-decoration-color:#b3afe2;text-decoration-skip-ink:none;"><span style="color:#3226c4">Требование</span>: Об отмене определения об отказе в удовлетворении заявления об исключении имущества из конкурсной массы.</div>
<div class="t" id="t87" style="left:614px;top:629.87px;font-size:12.5px;line-height:16px;color:#222;letter-spacing:0.159px;text-decoration:underline;text-decoration-color:#b3afe2;text-decoration-skip-ink:none;"><span style="color:#3226c4">Решение</span>: Определение оставлено без изменения.</div>
<div class="t" id="t88" style="left:663.5px;top:655.87px;font-size:12.5px;line-height:16px;color:#222;letter-spacing:0.279px;">Это отражено в</div>
<div class="t" id="t89" style="left:763.2px;top:655.87px;font-size:12.5px;line-height:16px;color:#111;font-weight:bold;transform:scaleX(1.0979);transform-origin:0 0;">абзаце 4 пункта 2 статьи 213.27</div>
<div class="t" id="t90" style="left:981.7px;top:655.87px;font-size:12.5px;line-height:16px;color:#222;letter-spacing:0.331px;">Закона о банкротстве, согласно которому в третью очередь удовлетворяются требования о внесении платы за</div>
<div class="t" id="t91" style="left:664px;top:671.87px;font-size:12.5px;line-height:16px;color:#222;letter-spacing:0.266px;text-decoration:underline;text-decoration-color:#b3afe2;text-decoration-skip-ink:none;">жилое помещение и коммунальные услуги, в том числе об уплате взноса на капитальный ремонт общего имущества в многоквартирном доме.</div>
<div class="t" id="t92" style="left:614px;top:710.71px;font-size:16px;line-height:20px;color:#3226c4;letter-spacing:-0.489px;">Постановление Восьмого арбитражного апелляционного суда от 08.02.2021 N 08АП-13308/2020 по делу N А70-8801/2020</div>
<div class="t" id="t93" style="left:614px;top:730.87px;font-size:12.5px;line-height:16px;color:#222;letter-spacing:0.281px;"><span style="color:#3226c4">Требование</span>: Об отмене определения об отказе в исключении из конкурсной массы имущества должника.</div>
<div class="t" id="t94" style="left:614px;top:746.87px;font-size:12.5px;line-height:16px;color:#222;letter-spacing:0.159px;"><span style="color:#3226c4">Решение</span>: Определение оставлено без изменения.</div>
<div class="t" id="t95" style="left:663.5px;top:772.87px;font-size:12.5px;line-height:16px;color:#222;letter-spacing:0.279px;">Это отражено в</div>
<div class="t" id="t96" style="left:763.2px;top:772.87px;font-size:12.5px;line-height:16px;color:#111;font-weight:bold;transform:scaleX(1.0979);transform-origin:0 0;">абзаце 4 пункта 2 статьи 213.27</div>
<div class="t" id="t97" style="left:981.7px;top:772.87px;font-size:12.5px;line-height:16px;color:#222;letter-spacing:0.331px;">Закона о банкротстве, согласно которому в третью очередь удовлетворяются требования о внесении платы за</div>
<div class="t" id="t98" style="left:664px;top:788.87px;font-size:12.5px;line-height:16px;color:#222;letter-spacing:0.266px;">жилое помещение и коммунальные услуги, в том числе об уплате взноса на капитальный ремонт общего имущества в многоквартирном доме.</div>
<div class="t" id="t99" style="left:614px;top:827.71px;font-size:16px;line-height:20px;color:#3226c4;letter-spacing:-0.494px;">Постановление Восьмого арбитражного апелляционного суда от 03.07.2020 N 08АП-3753/2020, 08АП-3924/2020 по делу N А75-11722/2019</div>
<div class="t" id="t100" style="left:614px;top:847.87px;font-size:12.5px;line-height:16px;color:#222;letter-spacing:0.265px;"><span style="color:#3226c4">Требование</span>: Об отмене определения об исключении из конкурсной массы денежных средств.</div>
<div class="t" id="t101" style="left:614px;top:863.87px;font-size:12.5px;line-height:16px;color:#222;letter-spacing:0.118px;"><span style="color:#3226c4">Решение</span>: Определение изменено.</div>
<div class="t" id="t102" style="left:663.5px;top:889.87px;font-size:12.5px;line-height:16px;color:#222;letter-spacing:0.222px;">Согласно</div>
<div class="t" id="t103" style="left:724.2px;top:889.87px;font-size:12.5px;line-height:16px;color:#111;font-weight:bold;transform:scaleX(1.0943);transform-origin:0 0;">абзацу 4 пункта 2 статьи 213.27</div>
<div class="t" id="t104" style="left:941.7px;top:889.87px;font-size:12.5px;line-height:16px;color:#222;letter-spacing:0.308px;">Закона о банкротстве требования кредиторов по текущим платежам о внесении платы за жилое помещение и</div>
<div class="t" id="t105" style="left:664px;top:905.87px;font-size:12.5px;line-height:16px;color:#222;letter-spacing:0.292px;">коммунальные услуги, в том числе об уплате взноса на капитальный ремонт общего имущества в многоквартирном доме, удовлетворяются в третью очередь.</div>
<div class="t" id="t106" style="left:614px;top:944.71px;font-size:16px;line-height:20px;color:#3226c4;letter-spacing:-0.489px;">Постановление Восьмого арбитражного апелляционного суда от 21.10.2019 N 08АП-10648/2019 по делу N А75-6945/2018</div>
<div class="t" id="t107" style="left:614px;top:964.87px;font-size:12.5px;line-height:16px;color:#222;letter-spacing:0.283px;"><span style="color:#3226c4">Требование</span>: Об отмене определения об отказе в удовлетворении жалобы на действия (бездействие) финансового управляющего должника.</div>
<div class="t" id="t108" style="left:663.5px;top:990.87px;font-size:12.5px;line-height:16px;color:#222;letter-spacing:0.279px;">Это отражено в</div>
<div class="t" id="t109" style="left:763.2px;top:990.87px;font-size:12.5px;line-height:16px;color:#111;font-weight:bold;transform:scaleX(1.0979);transform-origin:0 0;">абзаце 4 пункта 2 статьи 213.27</div>
<div class="t" id="t110" style="left:981.7px;top:990.87px;font-size:12.5px;line-height:16px;color:#222;letter-spacing:0.331px;">Закона о банкротстве, согласно которому в третью очередь удовлетворяются требования о внесении платы за</div>
<div class="t" id="t111" style="left:664px;top:1006.87px;font-size:12.5px;line-height:16px;color:#222;letter-spacing:0.266px;">жилое помещение и коммунальные услуги, в том числе об уплате взноса на капитальный ремонт общего имущества в многоквартирном доме.</div>
<div class="t" id="t112" style="left:614px;top:1045.71px;font-size:16px;line-height:20px;color:#3226c4;letter-spacing:-0.489px;">Постановление Восьмого арбитражного апелляционного суда от 17.07.2019 N 08АП-7020/2019 по делу N А70-12484/2017</div>
<div class="t" id="t113" style="left:614px;top:1065.87px;font-size:12.5px;line-height:16px;color:#222;letter-spacing:0.266px;"><span style="color:#3226c4">Требование</span>: Об отмене определения об отказе в удовлетворении ходатайства об исключении денежных средств из конкурсной массы должника.</div>
<div class="t" id="t114" style="left:614px;top:1081.87px;font-size:12.5px;line-height:16px;color:#222;letter-spacing:0.159px;"><span style="color:#3226c4">Решение</span>: Определение оставлено без изменения.</div>
<div class="t" id="t115" style="left:663.5px;top:1107.87px;font-size:12.5px;line-height:16px;color:#222;letter-spacing:0.279px;">Это отражено в</div>
<div class="t" id="t116" style="left:763.2px;top:1107.87px;font-size:12.5px;line-height:16px;color:#111;font-weight:bold;transform:scaleX(1.0979);transform-origin:0 0;">абзаце 4 пункта 2 статьи 213.27</div>
<div class="t" id="t117" style="left:981.7px;top:1107.87px;font-size:12.5px;line-height:16px;color:#222;letter-spacing:0.331px;">Закона о банкротстве, согласно которому в третью очередь удовлетворяются требования о внесении платы за</div>
<div class="t" id="t118" style="left:664px;top:1123.87px;font-size:12.5px;line-height:16px;color:#222;letter-spacing:0.266px;">жилое помещение и коммунальные услуги, в том числе об уплате взноса на капитальный ремонт общего имущества в многоквартирном доме.</div>
<div class="t" id="t119" style="left:89px;top:1171.87px;font-size:12.5px;line-height:16px;color:#fff;letter-spacing:-0.438px;">Мои дела | Электр...</div>
<div class="t" id="t120" style="left:250px;top:1171.87px;font-size:12.5px;line-height:16px;color:#fff;letter-spacing:-0.024px;">Помощник арбит...</div>
<div class="t" id="t121" style="left:411px;top:1171.87px;font-size:12.5px;line-height:16px;color:#fff;letter-spacing:-0.508px;">Расходы ЖКХ в ба...</div>
<div class="t" id="t122" style="left:670px;top:1171.87px;font-size:12.5px;line-height:16px;color:#fff;letter-spacing:-0.320px;">Этот компьютер</div>
<div class="t" id="t123" style="left:830px;top:1171.87px;font-size:12.5px;line-height:16px;color:#fff;letter-spacing:-0.294px;">C:\YandexDisk\Пр...</div>
<div class="t" id="t124" style="left:991px;top:1171.87px;font-size:12.5px;line-height:16px;color:#fff;letter-spacing:-0.205px;">КонсультантПлюс...</div>
<div class="t" id="t125" style="left:1152px;top:1171.87px;font-size:12.5px;line-height:16px;color:#fff;letter-spacing:-0.498px;">Отзыв на заявлени...</div>
<div class="t" id="t126" style="left:1313px;top:1171.87px;font-size:12.5px;line-height:16px;color:#fff;letter-spacing:-0.431px;">Telegram (3)</div>
<div class="t" id="t127" style="left:1772px;top:1171.87px;font-size:12.5px;line-height:16px;color:#fff;letter-spacing:-1.010px;">РУС</div>
<div class="t" id="t128" style="left:1820px;top:1162.87px;font-size:12.5px;line-height:16px;color:#fff;letter-spacing:-0.856px;">15:53</div>
<div class="t" id="t129" style="left:1808px;top:1180.87px;font-size:12.5px;line-height:16px;color:#fff;letter-spacing:-0.956px;">10.01.2022</div>
</body></html>
